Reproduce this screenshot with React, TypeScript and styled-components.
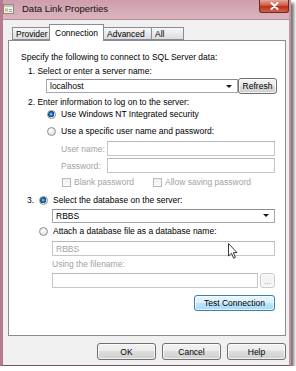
import React from "react"
import styled, { createGlobalStyle } from "styled-components"

const GlobalStyle = createGlobalStyle`
  html, body {
    margin: 0;
    padding: 0;
    background: #ffffff;
  }
  body {
    font-family: "Liberation Sans", Arial, sans-serif;
    font-size: 8.5px;
    color: #000;
  }
  * {
    box-sizing: border-box;
  }
`

const Window = styled.div`
  width: 291px;
  height: 366px;
  display: flex;
  flex-direction: column;
  border-left: 3px solid #b9798d;
  border-right: 2px solid #c5939f;
  border-bottom: 1px solid #6f5560;
  background: #d6aab5;
  box-shadow: 3px 3px 3px rgba(0, 0, 0, 0.55);
`

const TitleBar = styled.div`
  height: 19px;
  flex: none;
  display: flex;
  align-items: flex-start;
  background: linear-gradient(#cf9dab, #dbb5be);
`

const AppIcon = styled.svg`
  margin: 4px 0 0 0;
  flex: none;
`

const Title = styled.span`
  margin: 3px 0 0 8px;
  font-size: 9.5px;
  line-height: 11px;
  color: #111;
  flex: 1;
`

const CloseButton = styled.div`
  width: 30px;
  height: 13px;
  flex: none;
  display: flex;
  align-items: center;
  justify-content: center;
  border: 1px solid #6b2a24;
  border-top: none;
  border-radius: 0 0 3px 3px;
  background: linear-gradient(#e5a79c, #cf5b45 45%, #bb2f1a 55%, #d0634b);
`

const Client = styled.div`
  flex: 1;
  display: flex;
  flex-direction: column;
  background: #f0f0f0;
  border-top: 1px solid #b08c98;
  padding: 4px 3px 0 5px;
`

const TabStrip = styled.div`
  position: relative;
  z-index: 1;
  height: 17px;
  margin-bottom: -1px;
  padding-left: 4px;
  display: flex;
  align-items: flex-end;
`

const Tab = styled.div<{ $active?: boolean; $w: number }>`
  width: ${(p) => p.$w}px;
  height: ${(p) => (p.$active ? 17 : 13)}px;
  margin-bottom: ${(p) => (p.$active ? 0 : 1)}px;
  margin-left: -1px;
  padding-left: ${(p) => (p.$active ? 5 : 3)}px;
  display: flex;
  align-items: center;
  border: 1px solid #898c95;
  border-bottom: ${(p) => (p.$active ? "none" : "1px solid #898c95")};
  background: ${(p) =>
    p.$active ? "#ffffff" : "linear-gradient(#f7f7f7, #e9e9e9 50%, #dbdbdb)"};
  font-size: 8.5px;
  line-height: 10px;
  padding-bottom: ${(p) => (p.$active ? 1 : 0)}px;
  &:first-child {
    margin-left: 0;
  }
`

const Panel = styled.div`
  position: relative;
  height: 296px;
  flex: none;
  border: 1px solid #898c95;
  background: #ffffff;
  padding: 10px 10px 0 12px;
  display: flex;
  flex-direction: column;
`

const Line = styled.div<{ $top: number; $indent?: number; $muted?: boolean }>`
  margin-top: ${(p) => p.$top}px;
  padding-left: ${(p) => p.$indent ?? 0}px;
  height: 12px;
  line-height: 12px;
  display: flex;
  align-items: center;
  white-space: nowrap;
  color: ${(p) => (p.$muted ? "#a3a3a3" : "#000")};
`

const Row = styled.div<{ $top: number; $indent?: number; $h: number; $end?: boolean }>`
  margin-top: ${(p) => p.$top}px;
  padding-left: ${(p) => p.$indent ?? 0}px;
  height: ${(p) => p.$h}px;
  display: flex;
  align-items: center;
  justify-content: ${(p) => (p.$end ? "flex-end" : "flex-start")};
`

const Combo = styled.div<{ $w?: number }>`
  width: ${(p) => (p.$w ? `${p.$w}px` : "auto")};
  flex: ${(p) => (p.$w ? "none" : 1)};
  height: 14px;
  border: 1px solid #a3a7ae;
  border-top-color: #8a8e96;
  background: #fff;
  display: flex;
  align-items: center;
  padding: 0 0 0 3px;
  line-height: 12px;
`

const ComboText = styled.span`
  flex: 1;
`

const Arrow = styled.span`
  width: 0;
  height: 0;
  margin-right: 5px;
  border-left: 3px solid transparent;
  border-right: 3px solid transparent;
  border-top: 3px solid #1a1a1a;
`

const Field = styled.div<{ $w?: number; $h?: number }>`
  width: ${(p) => (p.$w ? `${p.$w}px` : "auto")};
  flex: ${(p) => (p.$w ? "none" : 1)};
  height: ${(p) => p.$h ?? 15}px;
  border: 1px solid #c4c6ca;
  border-top-color: #b4b7bc;
  background: #fff;
  color: #a3a3a3;
  padding-left: 3px;
  display: flex;
  align-items: center;
`

const FieldLabel = styled.span`
  width: 46px;
  flex: none;
  color: #a3a3a3;
`

const Button = styled.div<{ $w: number; $h: number; $focus?: boolean; $disabled?: boolean }>`
  width: ${(p) => p.$w}px;
  height: ${(p) => p.$h}px;
  flex: none;
  display: flex;
  align-items: center;
  justify-content: center;
  border-radius: 3px;
  border: 1px solid
    ${(p) => (p.$focus ? "#3c7fb1" : p.$disabled ? "#c7c9cc" : "#707070")};
  background: ${(p) =>
    p.$focus
      ? "linear-gradient(#eaf6fd, #d9f0fc 50%, #bee6fd 50%, #a7d9f5)"
      : p.$disabled
      ? "#f4f4f4"
      : "linear-gradient(#f2f2f2, #ebebeb 50%, #dddddd 50%, #cfcfcf)"};
  color: ${(p) => (p.$disabled ? "#a3a3a3" : "#000")};
  box-shadow: inset 0 0 0 1px rgba(255, 255, 255, 0.7);
  font-size: 8.5px;
  line-height: 10px;
`

const Radio = styled.span<{ $checked?: boolean }>`
  width: 9px;
  height: 9px;
  flex: none;
  border-radius: 50%;
  border: 1px solid #8b8e92;
  background: ${(p) =>
    p.$checked
      ? "radial-gradient(circle at 45% 45%, #9be0ff 0, #2a7bb8 28%, #0d3e6e 55%, #e8eef3 62%, #f4f4f4 100%)"
      : "radial-gradient(circle at 40% 40%, #ffffff 0, #e6e6e6 60%, #d2d2d2 100%)"};
  margin-right: ${(p) => (p.$checked ? 5 : 5)}px;
`

const CheckBox = styled.span`
  width: 9px;
  height: 9px;
  flex: none;
  border: 1px solid #b9b9b9;
  background: linear-gradient(#f0f0f0, #fafafa);
  margin-right: 3px;
`

const CheckGroup = styled.div<{ $w: number }>`
  width: ${(p) => p.$w}px;
  flex: none;
  display: flex;
  align-items: center;
  color: #a3a3a3;
`

const Number = styled.span`
  width: 12px;
  flex: none;
`

const Cursor = styled.svg`
  position: absolute;
  left: 219px;
  top: 202px;
`

const Footer = styled.div`
  margin-top: 7px;
  display: flex;
  justify-content: flex-end;
  gap: 6px;
`

export default function App() {
  return (
    <>
      <GlobalStyle />
      <Window>
        <TitleBar>
          <AppIcon width="11" height="10" viewBox="0 0 11 10">
            <rect x="0.5" y="0.5" width="10" height="9" fill="#f4f2ee" stroke="#8d8a86" />
            <rect x="1" y="1" width="9" height="2" fill="#c9c4bb" />
            <rect x="2" y="4.5" width="3" height="3" fill="#e1b868" />
            <rect x="6" y="5" width="3" height="1" fill="#9aa3ad" />
            <rect x="6" y="7" width="3" height="1" fill="#9aa3ad" />
          </AppIcon>
          <Title>Data Link Properties</Title>
          <CloseButton>
            <svg width="9" height="8" viewBox="0 0 9 8">
              <path d="M1.5 1 L7.5 7 M7.5 1 L1.5 7" stroke="#ffffff" strokeWidth="2" strokeLinecap="round" />
            </svg>
          </CloseButton>
        </TitleBar>
        <Client>
          <TabStrip>
            <Tab $w={38}>Provider</Tab>
            <Tab $w={55} $active>
              Connection
            </Tab>
            <Tab $w={49}>Advanced</Tab>
            <Tab $w={33}>All</Tab>
          </TabStrip>
          <Panel>
            <Line $top={0}>Specify the following to connect to SQL Server data:</Line>
            <Line $top={2} $indent={7}>
              1. Select or enter a server name:
            </Line>
            <Row $top={1} $h={16} $indent={25}>
              <Combo $w={192}>
                <ComboText>localhost</ComboText>
                <Arrow />
              </Combo>
              <span style={{ width: 2 }} />
              <Button $w={39} $h={16}>
                Refresh
              </Button>
            </Row>
            <Line $top={2} $indent={7}>
              2. Enter information to log on to the server:
            </Line>
            <Line $top={0} $indent={26}>
              <Radio $checked />
              Use Windows NT Integrated security
            </Line>
            <Line $top={5} $indent={26}>
              <Radio />
              Use a specific user name and password:
            </Line>
            <Row $top={4} $h={15} $indent={40}>
              <FieldLabel>User name:</FieldLabel>
              <Field />
            </Row>
            <Row $top={2} $h={15} $indent={40}>
              <FieldLabel>Password:</FieldLabel>
              <Field />
            </Row>
            <Line $top={3} $indent={41}>
              <CheckGroup $w={91}>
                <CheckBox />
                Blank password
              </CheckGroup>
              <CheckGroup $w={110}>
                <CheckBox />
                Allow saving password
              </CheckGroup>
            </Line>
            <Line $top={6} $indent={6}>
              <Number>3.</Number>
              <Radio $checked />
              Select the database on the server:
            </Line>
            <Row $top={2} $h={15} $indent={31}>
              <Combo>
                <ComboText>RBBS</ComboText>
                <Arrow />
              </Combo>
            </Row>
            <Line $top={2} $indent={18}>
              <Radio />
              Attach a database file as a database name:
            </Line>
            <Row $top={4} $h={15} $indent={31}>
              <Field>RBBS</Field>
            </Row>
            <Line $top={2} $indent={31} $muted>
              Using the filename:
            </Line>
            <Row $top={3} $h={15} $indent={31}>
              <Field $w={206} />
              <span style={{ width: 4 }} />
              <Button $w={15} $h={15} $disabled>
                ...
              </Button>
            </Row>
            <Row $top={7} $h={16} $end>
              <Button $w={81} $h={16} $focus>
                Test Connection
              </Button>
            </Row>
            <Cursor width="10" height="17" viewBox="0 0 10 17">
              <path
                d="M0.5 0.5 L0.5 13 L3.5 10.3 L5.6 15.2 L7.4 14.4 L5.4 9.6 L9 9.6 Z"
                fill="#ffffff"
                stroke="#222"
                strokeWidth="0.9"
                strokeLinejoin="round"
              />
            </Cursor>
          </Panel>
          <Footer>
            <Button $w={59} $h={17}>
              OK
            </Button>
            <Button $w={59} $h={17}>
              Cancel
            </Button>
            <Button $w={59} $h={17}>
              Help
            </Button>
          </Footer>
        </Client>
      </Window>
    </>
  )
}
